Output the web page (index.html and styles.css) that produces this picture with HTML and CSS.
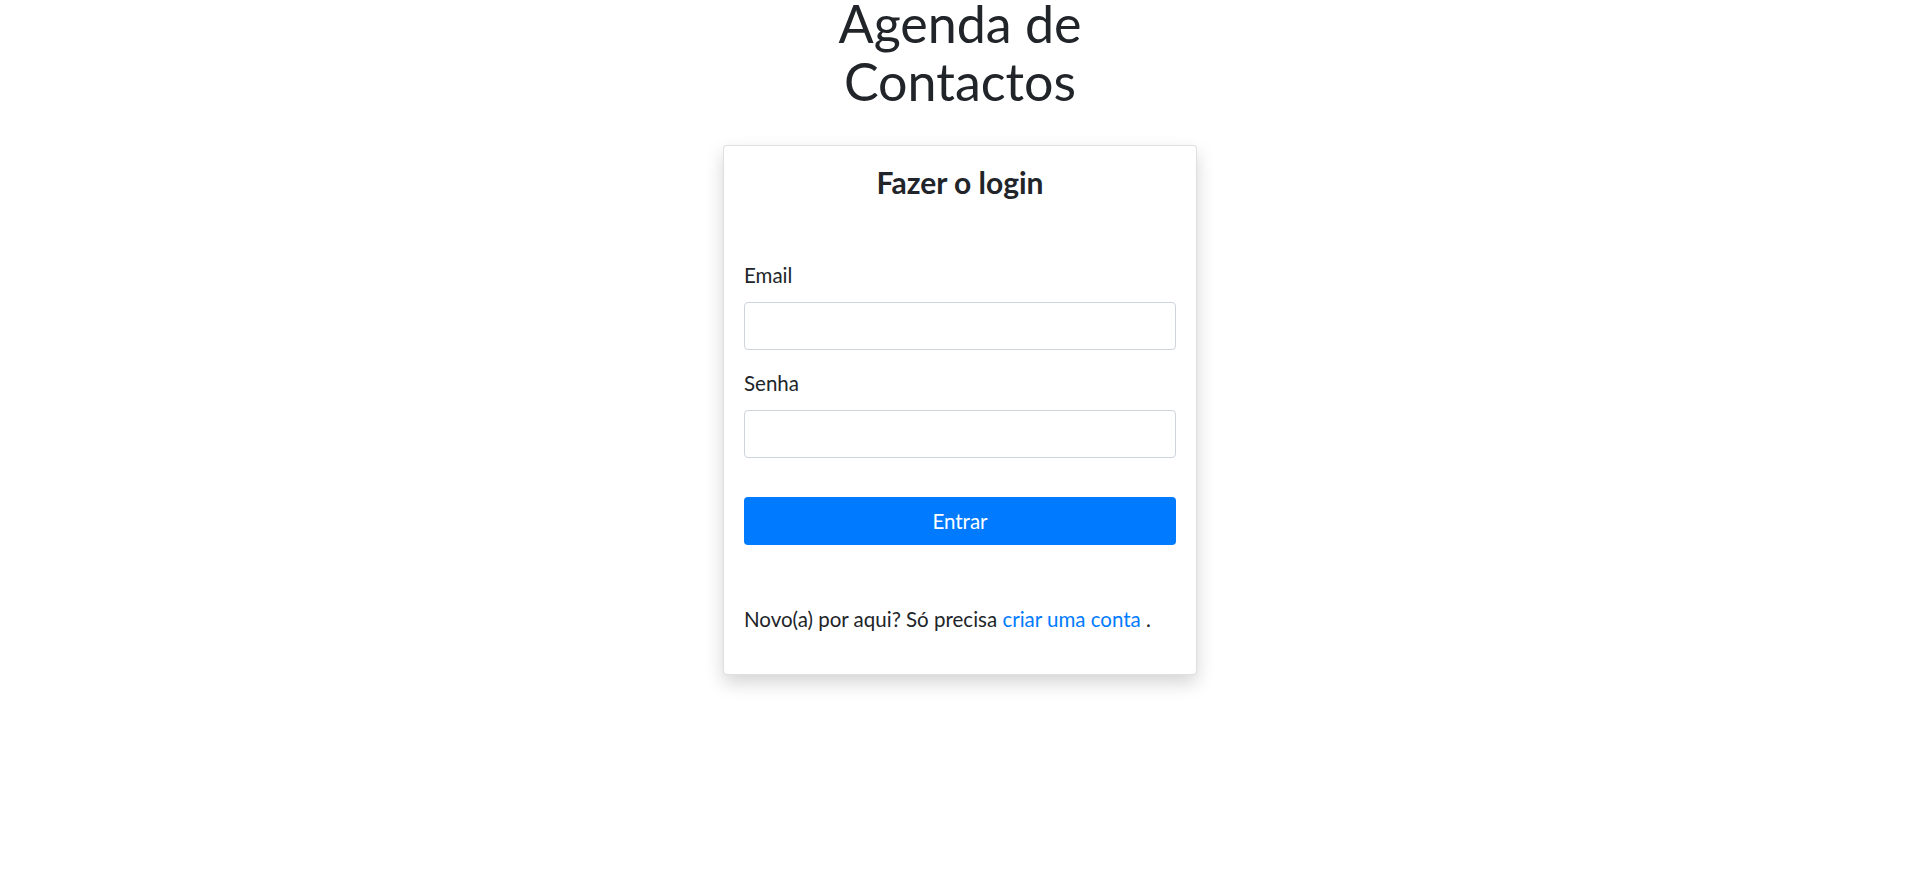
FILE: index.html
```html
<!DOCTYPE html>
<html lang="pt">
<head>
<meta charset="utf-8">
<title>Agenda de Contactos</title>
<link rel="stylesheet" href="styles.css">
</head>
<body>
<main class="page">
  <h1 class="title">Agenda de Contactos</h1>
  <section class="card">
    <h2 class="card-title">Fazer o login</h2>
    <form class="form">
      <div class="group">
        <label class="label" for="email">Email</label>
        <input class="input" id="email" type="email">
      </div>
      <div class="group">
        <label class="label" for="senha">Senha</label>
        <input class="input" id="senha" type="password">
      </div>
      <button class="btn" type="button">Entrar</button>
    </form>
    <p class="footer">Novo(a) por aqui? Só precisa <a class="link" href="#">criar uma conta</a> .</p>
  </section>
</main>
</body>
</html>
```

FILE: styles.css
```css
html, body {
  margin: 0;
  padding: 0;
  background: #fff;
}
body {
  font-family: Lato, "Noto Sans", sans-serif;
  color: #212529;
}
.page {
  display: flex;
  flex-direction: column;
  align-items: center;
  padding-bottom: 40px;
}
.title {
  width: 320px;
  margin: -6px 0 35px;
  text-align: center;
  font-size: 52px;
  font-weight: 400;
  line-height: 58px;
}
.card {
  width: 432px;
  padding: 20px 20px 40px;
  border: 1px solid rgba(0,0,0,.125);
  border-radius: 4px;
  box-shadow: 0 8px 18px rgba(0,0,0,.17);
  background: #fff;
}
.card-title {
  margin: 0;
  text-align: center;
  font-size: 30px;
  font-weight: 700;
  line-height: 32px;
}
.form {
  margin-top: 62px;
  display: flex;
  flex-direction: column;
}
.group {
  display: flex;
  flex-direction: column;
  margin-bottom: 18px;
}
.label {
  font-size: 20.5px;
  line-height: 30px;
  margin-bottom: 12px;
}
.input {
  box-sizing: border-box;
  height: 48px;
  width: 100%;
  border: 1px solid #ced4da;
  border-radius: 4px;
  font-size: 20px;
  padding: 8px 16px;
  font-family: inherit;
}
.btn {
  margin-top: 21px;
  height: 48px;
  border: 0;
  border-radius: 4px;
  background: #007bff;
  color: #fff;
  font-family: inherit;
  font-size: 20.5px;
  cursor: pointer;
}
.footer {
  margin: 59px 0 0;
  font-size: 20.5px;
  line-height: 30px;
}
.link {
  color: #007bff;
  text-decoration: none;
}
```
